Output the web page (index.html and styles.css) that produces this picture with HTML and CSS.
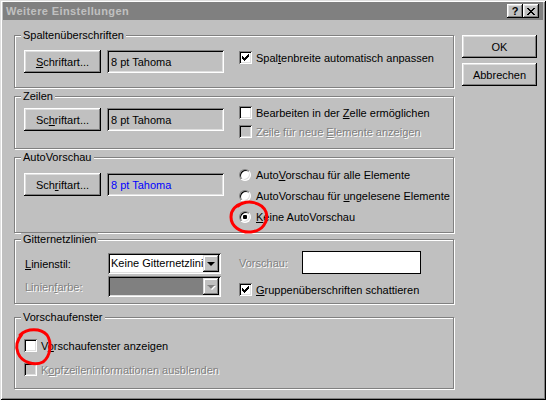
FILE: index.html
```html
<!DOCTYPE html>
<html lang="de">
<head>
<meta charset="utf-8">
<title>Weitere Einstellungen</title>
<link rel="stylesheet" href="styles.css">
</head>
<body>
<div class="window">
  <div class="titlebar">
    <span class="title">Weitere Einstellungen</span>
    <div class="caption-btns">
      <span class="cbtn help">?</span>
      <span class="cbtn close">
        <svg width="8" height="7" viewBox="0 0 8 7" shape-rendering="crispEdges"><path d="M0 0h2v1H0zM6 0h2v1H6zM1 1h2v1H1zM5 1h2v1H5zM2 2h4v1H2zM3 3h2v1H3zM2 4h4v1H2zM1 5h2v1H1zM5 5h2v1H5zM0 6h2v1H0zM6 6h2v1H6z" fill="#000"/></svg>
      </span>
    </div>
  </div>

  <div class="client">
    <div class="groups">

      <section class="group g1">
        <span class="legend">Spaltenüberschriften</span>
        <div class="group-body">
          <div class="fontpick">
            <span class="btn font-btn"><u>S</u>chriftart...</span>
            <span class="field">8 pt Tahoma</span>
          </div>
          <div class="options">
            <div class="opt"><span class="check"><svg width="13" height="13" viewBox="0 0 13 13" shape-rendering="crispEdges"><path d="M3 5h1v3H3zM4 6h1v3H4zM5 7h1v3H5zM6 6h1v3H6zM7 5h1v3H7zM8 4h1v3H8zM9 3h1v3H9z" fill="#000"/></svg></span><span>Spal<u>t</u>enbreite automatisch anpassen</span></div>
          </div>
        </div>
      </section>

      <section class="group g2">
        <span class="legend">Zeilen</span>
        <div class="group-body">
          <div class="fontpick">
            <span class="btn font-btn">Sc<u>h</u>riftart...</span>
            <span class="field">8 pt Tahoma</span>
          </div>
          <div class="options">
            <div class="opt"><span class="check"></span><span>Bearbeiten in der <u>Z</u>elle ermöglichen</span></div>
            <div class="opt disabled"><span class="check"></span><span>Zeile für neue <u>E</u>lemente anzeigen</span></div>
          </div>
        </div>
      </section>

      <section class="group g3">
        <span class="legend">AutoVorschau</span>
        <div class="group-body">
          <div class="fontpick">
            <span class="btn font-btn">Sch<u>r</u>iftart...</span>
            <span class="field blue">8 pt Tahoma</span>
          </div>
          <div class="options">
            <div class="opt"><span class="radio"></span><span>Auto<u>V</u>orschau für alle Elemente</span></div>
            <div class="opt"><span class="radio"></span><span>AutoVorschau für <u>u</u>ngelesene Elemente</span></div>
            <div class="opt"><span class="radio on"></span><span><u>K</u>eine AutoVorschau</span></div>
          </div>
        </div>
      </section>

      <section class="group g4">
        <span class="legend">Gitternetzlinien</span>
        <div class="group-body">
          <div class="combos">
            <div class="combo-row">
              <span class="combo-label"><u>L</u>inienstil:</span>
              <span class="combo"><span class="combo-text">Keine Gitternetzlinien</span><span class="drop"><i class="arrow"></i></span></span>
            </div>
            <div class="combo-row disabled">
              <span class="combo-label">Linien<u>f</u>arbe:</span>
              <span class="combo off"><span class="combo-text"></span><span class="drop"><i class="arrow"></i></span></span>
            </div>
          </div>
          <div class="options g4-options">
            <div class="preview-row">
              <span class="disabled preview-label">Vorschau:</span>
              <span class="preview"></span>
            </div>
            <div class="opt"><span class="check"><svg width="13" height="13" viewBox="0 0 13 13" shape-rendering="crispEdges"><path d="M3 5h1v3H3zM4 6h1v3H4zM5 7h1v3H5zM6 6h1v3H6zM7 5h1v3H7zM8 4h1v3H8zM9 3h1v3H9z" fill="#000"/></svg></span><span><u>G</u>ruppenüberschriften schattieren</span></div>
          </div>
        </div>
      </section>

      <section class="group g5">
        <span class="legend">Vorschaufenster</span>
        <div class="stack">
          <div class="opt"><span class="check"></span><span>V<u>o</u>rschaufenster anzeigen</span></div>
          <div class="opt disabled"><span class="check"></span><span>K<u>o</u>pfzeileninformationen ausblenden</span></div>
        </div>
      </section>

    </div>

    <div class="actions">
      <span class="btn action">OK</span>
      <span class="btn action">Abbrechen</span>
    </div>
  </div>

  <svg class="marks" width="546" height="400" viewBox="0 0 546 400">
    <path d="M238 206 C247 199 262 202 266 212 C269 222 262 231 251 232 C240 233 231 226 231 217 C231 210 236 205 243 203" fill="none" stroke="#ff0000" stroke-width="3" stroke-linecap="round"/>
    <path d="M20 335 C27 328 41 328 47 335 C52 342 51 356 43 362 C35 366 22 363 18 353 C15 346 17 340 22 334" fill="none" stroke="#ff0000" stroke-width="3" stroke-linecap="round"/>
  </svg>
</div>
</body>
</html>
```

FILE: styles.css
```css
* {
  box-sizing: border-box;
  margin: 0;
  padding: 0;
}

html, body {
  width: 546px;
  height: 400px;
  overflow: hidden;
}

body {
  background: #c0c0c0;
  font: 11px "Liberation Sans", Arial, sans-serif;
  color: #000;
}

u {
  text-decoration: underline;
  text-underline-offset: 1px;
}

/* dialog frame */
.window {
  position: relative;
  width: 546px;
  height: 400px;
  padding: 2px 3px 3px 3px;
  background: #c0c0c0;
  box-shadow: inset 1px 1px #dfdfdf, inset -1px -1px #000, inset 2px 2px #fff, inset -2px -2px #808080;
}

.titlebar {
  height: 18px;
  background: #808080;
  display: flex;
  align-items: center;
  justify-content: space-between;
  padding: 0 4px 0 3px;
}

.title {
  color: #c0c0c0;
  font-weight: bold;
  font-size: 11px;
  letter-spacing: 0.4px;
}

.caption-btns {
  display: flex;
  gap: 0;
}

.cbtn {
  width: 16px;
  height: 14px;
  display: flex;
  align-items: center;
  justify-content: center;
  background: #c0c0c0;
  box-shadow: inset -1px -1px #000, inset 1px 1px #fff, inset -2px -2px #808080, inset 2px 2px #dfdfdf;
  font-weight: bold;
  font-size: 11px;
  line-height: 14px;
}

.cbtn.help {
  padding-bottom: 1px;
}

/* client area */
.client {
  display: flex;
  padding: 15px 0 0 11px;
}

.groups {
  width: 440px;
  display: flex;
  flex-direction: column;
}

.actions {
  margin-left: 8px;
  display: flex;
  flex-direction: column;
  gap: 5px;
}

/* raised push button */
.btn {
  display: flex;
  align-items: center;
  justify-content: center;
  height: 23px;
  background: #c0c0c0;
  box-shadow: inset -1px -1px #000, inset 1px 1px #fff, inset -2px -2px #808080, inset 2px 2px #dfdfdf;
}

.action {
  width: 75px;
}

/* etched group frame */
.group {
  position: relative;
  border: 1px solid #808080;
  box-shadow: inset 1px 1px #fff, 1px 1px #fff;
  padding-left: 9px;
}

.legend {
  position: absolute;
  top: -7px;
  left: 6px;
  padding: 0 2px;
  line-height: 13px;
  background: #c0c0c0;
}

.group-body {
  display: grid;
  grid-template-columns: 215px 1fr;
}

.fontpick {
  display: flex;
  gap: 6px;
  align-items: flex-start;
}

.font-btn {
  width: 77px;
}

.field {
  width: 117px;
  height: 23px;
  display: flex;
  align-items: center;
  padding-left: 4px;
  box-shadow: inset 1px 1px #808080, inset -1px -1px #fff, inset 2px 2px #000, inset -2px -2px #dfdfdf;
}

.field.blue {
  color: #0000ff;
}

.options {
  display: flex;
  flex-direction: column;
}

.opt {
  display: flex;
  align-items: center;
  gap: 4px;
  height: 13px;
  white-space: nowrap;
}

.check {
  flex: none;
  width: 13px;
  height: 13px;
  background: #fff;
  box-shadow: inset 1px 1px #808080, inset -1px -1px #fff, inset 2px 2px #000, inset -2px -2px #dfdfdf;
}

.check svg {
  display: block;
}

.radio {
  flex: none;
  position: relative;
  width: 12px;
  height: 12px;
  margin-right: 1px;
  border-radius: 50%;
  background: #fff;
  border: 1px solid;
  border-color: #808080 #fff #fff #808080;
  box-shadow: inset 1px 1px #000, inset -1px -1px #dfdfdf;
}

.radio.on::after {
  content: "";
  position: absolute;
  left: 3px;
  top: 3px;
  width: 4px;
  height: 4px;
  border-radius: 1px;
  background: #000;
}

.disabled {
  color: #808080;
  text-shadow: 1px 1px #fff;
}

.opt.disabled .check {
  background: #c0c0c0;
}

/* per-group spacing */
.g1 {
  padding-top: 14px;
  padding-bottom: 14px;
}

.g1 .options {
  padding-top: 1px;
}

.g2 {
  margin-top: 8px;
  padding-top: 9px;
  padding-bottom: 10px;
}

.g2 .fontpick {
  margin-top: 2px;
}

.g2 .options {
  gap: 6px;
}

.g3 {
  margin-top: 8px;
  padding-top: 10px;
  padding-bottom: 9px;
}

.g3 .fontpick {
  margin-top: 5px;
}

.g3 .options {
  gap: 8px;
}

.g4 {
  margin-top: 6px;
  padding-top: 13px;
  padding-bottom: 6px;
}

.combos {
  display: flex;
  flex-direction: column;
  gap: 2px;
}

.combo-row {
  display: flex;
  align-items: center;
}

.combo-label {
  width: 84px;
  padding-left: 1px;
}

.combo-row.disabled .combo {
  text-shadow: none;
}

.combo {
  position: relative;
  display: flex;
  width: 113px;
  height: 21px;
  padding: 2px;
  background: #fff;
  color: #000;
  box-shadow: inset 1px 1px #808080, inset -1px -1px #fff, inset 2px 2px #000, inset -2px -2px #dfdfdf;
}

.combo.off {
  background: #808080;
}

.combo-text {
  flex: 1;
  overflow: hidden;
  white-space: nowrap;
  line-height: 17px;
  padding-left: 1px;
}

.drop {
  flex: none;
  width: 16px;
  height: 17px;
  display: flex;
  align-items: center;
  justify-content: center;
  background: #c0c0c0;
  box-shadow: inset -1px -1px #000, inset 1px 1px #dfdfdf, inset -2px -2px #808080, inset 2px 2px #fff;
}

.arrow {
  width: 0;
  height: 0;
  border-left: 4px solid transparent;
  border-right: 4px solid transparent;
  border-top: 4px solid #000;
}

.combo.off .arrow {
  border-top-color: #808080;
  filter: drop-shadow(1px 1px 0 #fff);
}

.g4-options {
  margin-top: -2px;
}

.preview-row {
  display: flex;
  align-items: center;
  height: 23px;
  margin-bottom: 9px;
}

.preview-label {
  width: 63px;
}

.preview {
  width: 119px;
  height: 23px;
  background: #fff;
  border: 1px solid #000;
}

.g5 {
  margin-top: 13px;
  padding-top: 21px;
  padding-bottom: 12px;
}

.stack {
  display: flex;
  flex-direction: column;
  gap: 11px;
}

/* red hand-drawn marks over the dialog */
.marks {
  position: absolute;
  left: 0;
  top: 0;
  pointer-events: none;
}
```
